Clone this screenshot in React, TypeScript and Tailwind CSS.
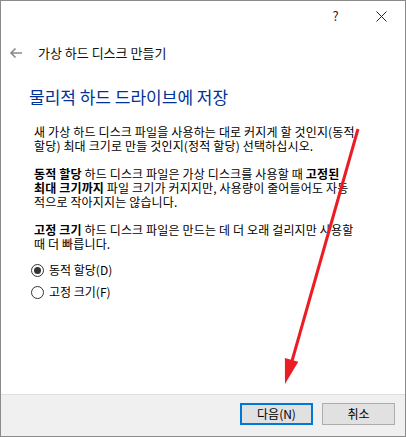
const FONT = { fontFamily: '"Noto Sans CJK KR", "Noto Sans", sans-serif' };

function Radio({ checked, label }: { checked?: boolean; label: string }) {
    return (
        <div className="flex h-[22px] items-center">
            <span className="flex h-[13px] w-[13px] items-center justify-center rounded-full border border-[#333] bg-white">
                {checked && <span className="h-[7px] w-[7px] rounded-full bg-[#333]" />}
            </span>
            <span className="ml-[5px] text-[12px] text-black">{label}</span>
        </div>
    );
}

function RedArrow() {
    return (
        <svg className="pointer-events-none absolute inset-0" width="406" height="437" viewBox="0 0 406 437">
            <line x1="357" y1="128" x2="291" y2="360" stroke="#ec1c24" strokeWidth="3" />
            <polygon points="283.9,357 297.3,360.8 284,383" fill="#ec1c24" />
        </svg>
    );
}

export default function App() {
    return (
        <div className="relative flex h-[437px] w-[406px] flex-col border border-[#8a8a8a] bg-white text-black" style={FONT}>
            {/* title bar */}
            <div className="flex h-[30px] items-center justify-end pr-[1px]">
                <span className="flex w-[45px] justify-center text-[13px] text-[#222]">?</span>
                <span className="flex w-[46px] justify-center">
                    <svg width="11" height="11" viewBox="0 0 11 11">
                        <path d="M0.5 0.5 L10.5 10.5 M10.5 0.5 L0.5 10.5" stroke="#222" strokeWidth="1" />
                    </svg>
                </span>
            </div>

            {/* back row */}
            <div className="flex h-[44px] items-center">
                <svg className="ml-[8px]" width="14" height="12" viewBox="0 0 14 12">
                    <path d="M13 6 H2 M6.5 1.5 L2 6 L6.5 10.5" stroke="#8a8a8a" strokeWidth="1.6" fill="none" />
                </svg>
                <span className="ml-[15px] text-[13px] text-[#111]">가상 하드 디스크 만들기</span>
            </div>

            {/* content */}
            <div className="pl-[28px] pr-[16px]">
                <h1 className="mt-[10px] text-[17px] leading-[24px] text-[#003399]">물리적 하드 드라이브에 저장</h1>

                <div className="mt-[16px] pl-[5px] text-[12px] leading-[14px] tracking-[0.15px] whitespace-nowrap">
                    <p>
                        새 가상 하드 디스크 파일을 사용하는 대로 커지게 할 것인지(동적<br />
                        할당) 최대 크기로 만들 것인지(정적 할당) 선택하십시오.
                    </p>
                    <p className="mt-[14px]">
                        <b>동적 할당</b> 하드 디스크 파일은 가상 디스크를 사용할 때 <b>고정된</b><br />
                        <b>최대 크기까지</b> 파일 크기가 커지지만, 사용량이 줄어들어도 자동<br />
                        적으로 작아지지는 않습니다.
                    </p>
                    <p className="mt-[14px]">
                        <b>고정 크기</b> 하드 디스크 파일은 만드는 데 더 오래 걸리지만 사용할<br />
                        때 더 빠릅니다.
                    </p>
                </div>

                <div className="mt-[8px] pl-[2px]">
                    <Radio checked label="동적 할당(D)" />
                    <Radio label="고정 크기(F)" />
                </div>
            </div>

            <div className="flex-1" />

            {/* footer */}
            <div className="flex h-[42px] items-start justify-end gap-[9px] border-t border-[#dfdfdf] bg-[#f0f0f0] pt-[8px] pr-[10px]">
                <button className="h-[22px] w-[73px] border-2 border-[#0078d7] bg-[#e1e1e1] text-[12px] leading-none text-black">
                    다음(N)
                </button>
                <button className="h-[22px] w-[73px] border border-[#adadad] bg-[#e1e1e1] text-[12px] leading-none text-black">
                    취소
                </button>
            </div>

            <RedArrow />
        </div>
    );
}
